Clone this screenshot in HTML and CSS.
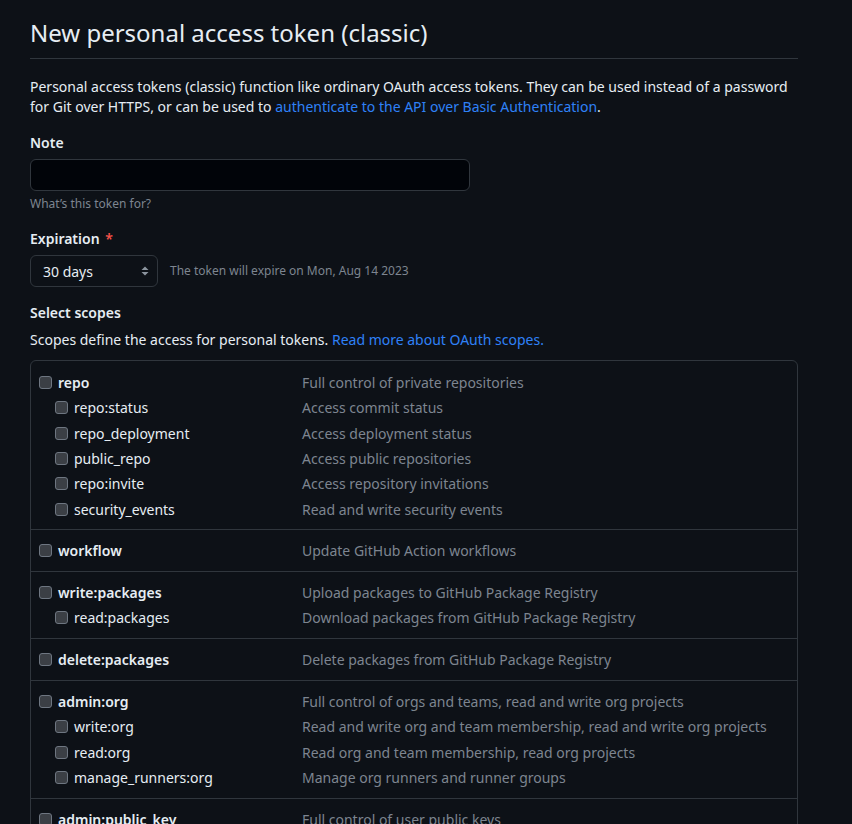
FILE: index.html
```html
<!DOCTYPE html>
<html lang="en">
<head>
<meta charset="utf-8">
<title>New personal access token (classic)</title>
<link rel="stylesheet" href="styles.css">
</head>
<body>
<main class="page">
  <div class="subhead">
    <h1 class="subhead-heading">New personal access token (classic)</h1>
  </div>
  <p class="intro">Personal access tokens (classic) function like ordinary OAuth access tokens. They can be used instead of a password for Git over HTTPS, or can be used to <a href="#">authenticate to the API over Basic Authentication</a>.</p>

  <div class="form-group">
    <label class="label" for="note">Note</label>
    <input class="input" id="note" type="text">
    <p class="note">What’s this token for?</p>
  </div>

  <div class="form-group">
    <label class="label label-exp">Expiration <span class="req">*</span></label>
    <div class="exp-row">
      <div class="select">
        <span>30 days</span>
        <svg class="select-arrows" width="8" height="12" viewBox="0 0 8 12"><path d="M4 1.5 7.5 5h-7z M4 10.5 0.5 7h7z" fill="#8b949e"/></svg>
      </div>
      <span class="exp-note">The token will expire on Mon, Aug 14 2023</span>
    </div>
  </div>

  <div class="scopes-head">
    <h3 class="label">Select scopes</h3>
    <p class="scopes-desc">Scopes define the access for personal tokens. <a href="#">Read more about OAuth scopes.</a></p>
  </div>

  <div class="scope-table">
    <div class="group">
      <div class="item parent"><span class="name"><span class="cb"></span>repo</span><span class="desc">Full control of private repositories</span></div>
      <div class="item child"><span class="name"><span class="cb"></span>repo:status</span><span class="desc">Access commit status</span></div>
      <div class="item child"><span class="name"><span class="cb"></span>repo_deployment</span><span class="desc">Access deployment status</span></div>
      <div class="item child"><span class="name"><span class="cb"></span>public_repo</span><span class="desc">Access public repositories</span></div>
      <div class="item child"><span class="name"><span class="cb"></span>repo:invite</span><span class="desc">Access repository invitations</span></div>
      <div class="item child"><span class="name"><span class="cb"></span>security_events</span><span class="desc">Read and write security events</span></div>
    </div>
    <div class="group">
      <div class="item parent"><span class="name"><span class="cb"></span>workflow</span><span class="desc">Update GitHub Action workflows</span></div>
    </div>
    <div class="group">
      <div class="item parent"><span class="name"><span class="cb"></span>write:packages</span><span class="desc">Upload packages to GitHub Package Registry</span></div>
      <div class="item child"><span class="name"><span class="cb"></span>read:packages</span><span class="desc">Download packages from GitHub Package Registry</span></div>
    </div>
    <div class="group">
      <div class="item parent"><span class="name"><span class="cb"></span>delete:packages</span><span class="desc">Delete packages from GitHub Package Registry</span></div>
    </div>
    <div class="group">
      <div class="item parent"><span class="name"><span class="cb"></span>admin:org</span><span class="desc">Full control of orgs and teams, read and write org projects</span></div>
      <div class="item child"><span class="name"><span class="cb"></span>write:org</span><span class="desc">Read and write org and team membership, read and write org projects</span></div>
      <div class="item child"><span class="name"><span class="cb"></span>read:org</span><span class="desc">Read org and team membership, read org projects</span></div>
      <div class="item child"><span class="name"><span class="cb"></span>manage_runners:org</span><span class="desc">Manage org runners and runner groups</span></div>
    </div>
    <div class="group">
      <div class="item parent"><span class="name"><span class="cb"></span>admin:public_key</span><span class="desc">Full control of user public keys</span></div>
      <div class="item child"><span class="name"><span class="cb"></span>write:public_key</span><span class="desc">Write user public keys</span></div>
      <div class="item child"><span class="name"><span class="cb"></span>read:public_key</span><span class="desc">Read user public keys</span></div>
    </div>
  </div>
</main>
</body>
</html>
```

FILE: styles.css
```css
* { box-sizing: border-box; }
html, body {
  margin: 0;
  background: #0d1117;
}
body {
  font-family: "Noto Sans", "Liberation Sans", sans-serif;
  font-size: 14px;
  line-height: 1.5;
  color: #e6edf3;
  overflow: hidden;
  height: 824px;
}
a { color: #2f81f7; text-decoration: none; }

.page {
  width: 768px;
  margin-left: 30px;
  padding-top: 18px;
}

.subhead {
  border-bottom: 1px solid #30363d;
  padding-bottom: 10px;
  margin-bottom: 18px;
}
.subhead-heading {
  margin: 0;
  font-size: 24px;
  font-weight: 400;
  line-height: 30px;
}

.intro {
  margin: 0 0 16px;
  line-height: 20px;
}

.form-group { margin-bottom: 16px; }
.label {
  display: block;
  margin: 0 0 6px;
  font-size: 14px;
  font-weight: 600;
  line-height: 20px;
}
.label-exp { margin-bottom: 6px; }
.req { color: #f85149; margin-left: 2px; }

.input {
  display: block;
  width: 440px;
  height: 32px;
  padding: 5px 12px;
  background: #010409;
  border: 1px solid #30363d;
  border-radius: 6px;
  color: #e6edf3;
  font: inherit;
}
.note {
  margin: 4px 0 0;
  font-size: 12px;
  line-height: 18px;
  color: #7d8590;
}

.exp-row {
  display: flex;
  align-items: center;
  gap: 12px;
}
.select {
  width: 128px;
  height: 32px;
  padding: 0 8px 0 12px;
  display: flex;
  align-items: center;
  justify-content: space-between;
  border: 1px solid #30363d;
  border-radius: 6px;
  background: #0d1117;
  color: #e6edf3;
}
.exp-note {
  font-size: 12px;
  color: #7d8590;
}

.scopes-head { margin-top: 14px; }
.scopes-head .label { margin-bottom: 7px; }
.scopes-desc { margin: 0 0 10px; line-height: 20px; }

.scope-table {
  border: 1px solid #30363d;
  border-radius: 6px;
}
.group {
  padding: 8px 0 7.5px;
  border-top: 1px solid #30363d;
}
.group:first-child { border-top: 0; padding-top: 9px; padding-bottom: 7px; }
.item {
  display: grid;
  grid-template-columns: 271px 1fr;
  align-items: center;
  height: 25.33px;
  color: #e6edf3;
}
.name {
  display: flex;
  align-items: center;
}
.parent .name { padding-left: 8px; font-weight: 600; }
.child .name { padding-left: 24px; }
.cb {
  width: 13px;
  height: 13px;
  margin-right: 6px;
  border: 1px solid #6e7681;
  border-radius: 3px;
  background: #3b3f45;
  flex: none;
}
.desc { color: #7d8590; }
```
